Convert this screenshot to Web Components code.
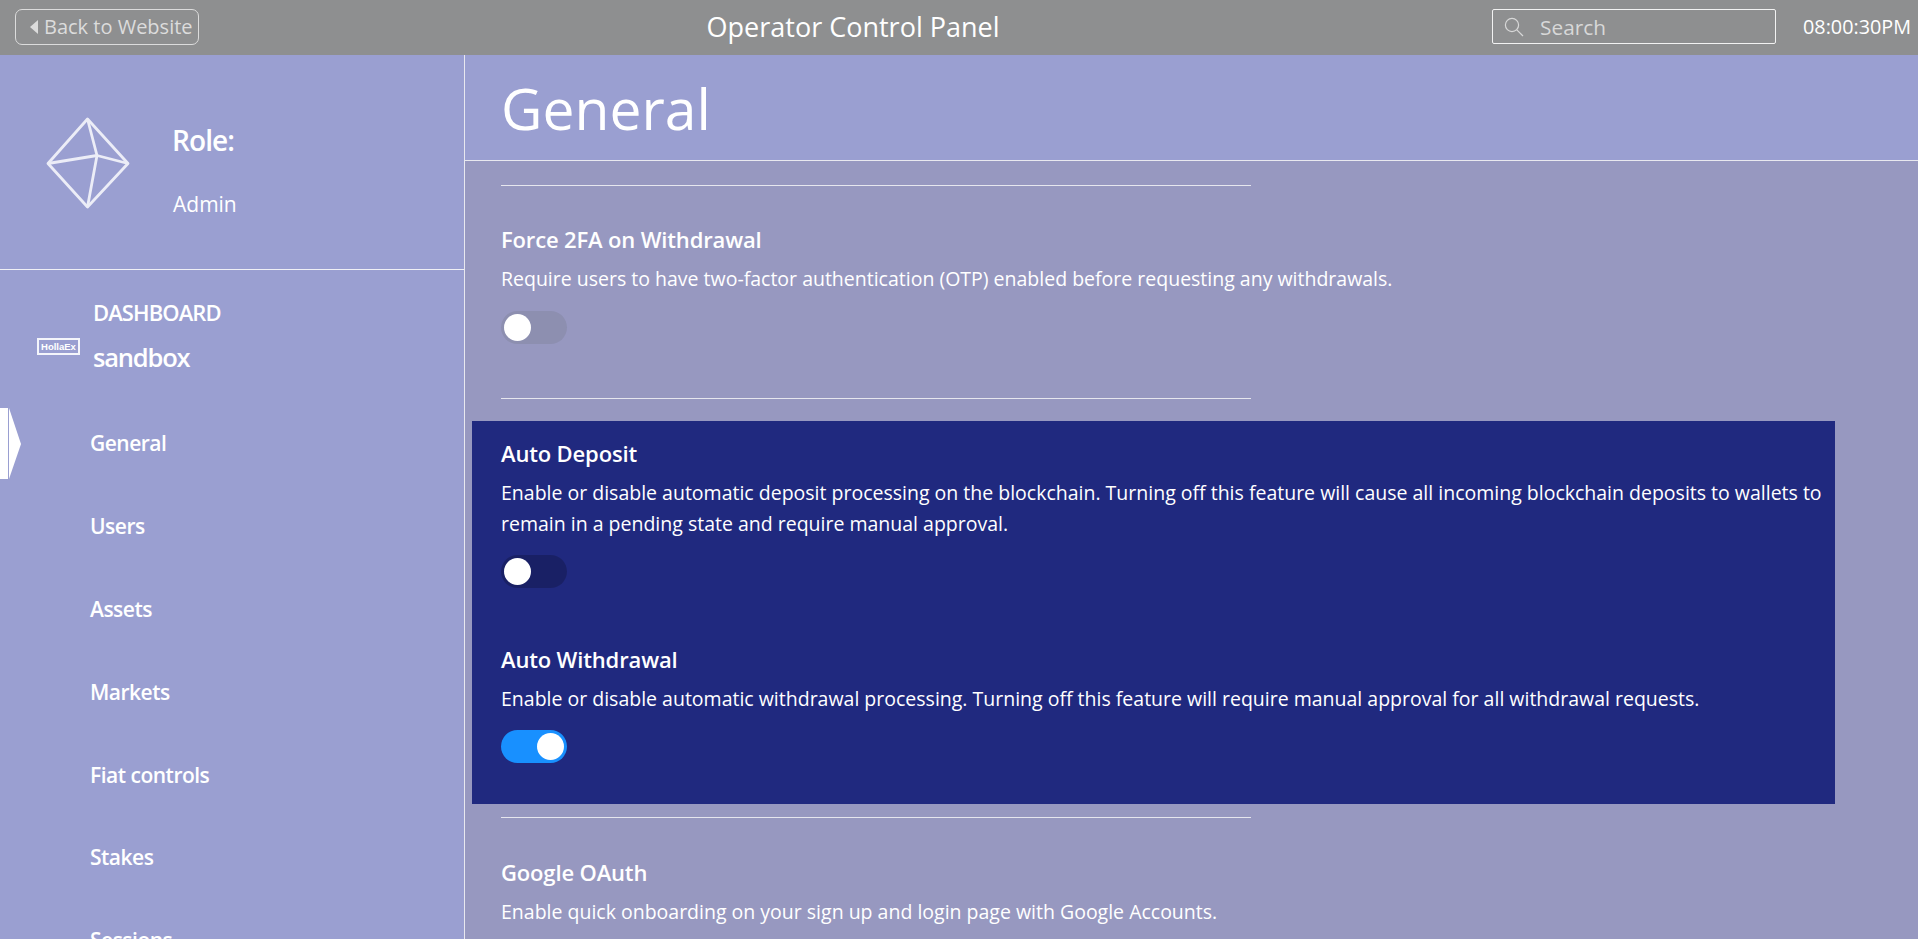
<!DOCTYPE html>
<html>
<head>
<meta charset="utf-8">
<title>Operator Control Panel</title>
<style>
    html, body {
        margin: 0;
        height: 939px;
        overflow: hidden;
        font-family: "Open Sans", "Noto Sans", sans-serif;
        color: #fff;
        background: #9798c0;
    }
</style>
</head>
<body>
<op-app></op-app>
<script>
class OpTopbar extends HTMLElement {
    constructor() {
        super();
        this.shadowDOM = this.attachShadow({ mode: "open" });
    }

    connectedCallback() {
        this.shadowDOM.innerHTML = `
        <style>
            :host {
                display: flex;
                justify-content: space-between;
                align-items: center;
                height: 55px;
                background: #8e8f90;
                box-sizing: border-box;
                padding: 0 7px 2px 15px;
            }
            .back {
                display: flex;
                align-items: center;
                box-sizing: border-box;
                width: 184px;
                height: 36px;
                border: 1px solid #dcdcdc;
                border-radius: 7px;
                padding-left: 14px;
                font-size: 20px;
                color: #dcdcdc;
                white-space: nowrap;
            }
            .back i {
                width: 0;
                height: 0;
                border: 7px solid transparent;
                border-left: 0;
                border-right: 8px solid #dcdcdc;
                margin-right: 6px;
            }
            .title {
                font-size: 27px;
                margin-left: 15px;
            }
            .right {
                display: flex;
                align-items: center;
            }
            .search {
                display: flex;
                align-items: center;
                box-sizing: border-box;
                width: 284px;
                height: 35px;
                border: 1px solid #f2f2f2;
                border-radius: 2px;
                padding-left: 11px;
                font-size: 20.8px;
                color: #d8d8d8;
            }
            .search svg {
                margin-right: 16px;
            }
            .clock {
                margin-left: 27px;
                font-size: 19.8px;
                white-space: nowrap;
            }
        </style>
        <div class="back"><i></i>Back to Website</div>
        <div class="title">Operator Control Panel</div>
        <div class="right">
            <div class="search">
                <svg width="20" height="20" viewBox="0 0 20 20" fill="none" stroke="#d8d8d8" stroke-width="1.2">
                    <circle cx="8" cy="8" r="6.6"/>
                    <path d="M12.8 12.8 L19 19"/>
                </svg>
                Search
            </div>
            <div class="clock">08:00:30PM</div>
        </div>`;
    }
}

class OpRole extends HTMLElement {
    constructor() {
        super();
        this.shadowDOM = this.attachShadow({ mode: "open" });
    }

    connectedCallback() {
        this.shadowDOM.innerHTML = `
        <style>
            :host {
                display: flex;
                align-items: center;
                box-sizing: border-box;
                height: 215px;
                padding-left: 46px;
                border-bottom: 1px solid #f0f0f5;
            }
            svg {
                margin: 2px 43px 0 0;
                flex: none;
            }
            .info {
                margin-top: 16px;
            }
            .role {
                font-size: 28px;
                font-weight: 600;
                line-height: 36px;
                letter-spacing: -0.9px;
                margin-left: -1px;
            }
            .name {
                font-size: 21px;
                line-height: 28px;
                margin-top: 32px;
            }
        </style>
        <svg width="84" height="92" viewBox="0 0 84 92" fill="none" stroke="#ecedf7" stroke-width="2.8" stroke-linejoin="round">
            <path d="M41.5 2 L82 46.5 L41.5 90 L2 46.5 Z"/>
            <path d="M41.5 2 L51 38.5 L41.5 90"/>
            <path d="M2 46.5 L51 38.5 L82 46.5"/>
        </svg>
        <div class="info">
            <div class="role">Role:</div>
            <div class="name">Admin</div>
        </div>`;
    }
}

class OpBrand extends HTMLElement {
    constructor() {
        super();
        this.shadowDOM = this.attachShadow({ mode: "open" });
    }

    connectedCallback() {
        this.shadowDOM.innerHTML = `
        <style>
            :host {
                display: flex;
                align-items: center;
                box-sizing: border-box;
                height: 100px;
                padding: 31px 0 0 37px;
            }
            .logo {
                box-sizing: border-box;
                width: 43px;
                height: 17px;
                border: 2px solid #f4f5fb;
                display: flex;
                align-items: center;
                justify-content: center;
                font: bold 9.5px "Liberation Sans", sans-serif;
                margin: 21px 13px 0 0;
            }
            .dash {
                font-size: 22px;
                font-weight: 600;
                line-height: 28px;
                letter-spacing: -0.9px;
            }
            .env {
                font-size: 25.5px;
                font-weight: 600;
                line-height: 34px;
                margin-top: 14px;
                letter-spacing: -1.2px;
            }
        </style>
        <div class="logo">HollaEx</div>
        <div>
            <div class="dash">DASHBOARD</div>
            <div class="env">sandbox</div>
        </div>`;
    }
}

class OpNavItem extends HTMLElement {
    constructor() {
        super();
        this.shadowDOM = this.attachShadow({ mode: "open" });
    }

    connectedCallback() {
        this.shadowDOM.innerHTML = `
        <style>
            :host {
                display: flex;
                align-items: center;
                position: relative;
                height: 82.8px;
                padding-left: 90px;
                font-size: 21px;
                font-weight: 600;
                letter-spacing: -0.5px;
                flex: none;
            }
            .mark {
                display: none;
                position: absolute;
                left: 0;
                top: 5.5px;
                width: 21px;
                height: 71px;
            }
            :host([active]) .mark {
                display: block;
            }
        </style>
        <svg class="mark" viewBox="0 0 21 71" fill="#fff">
            <rect width="8" height="71"/>
            <path d="M9 0 L21 36 L9 71 Z"/>
        </svg>
        <slot></slot>`;
    }
}

class OpSidebar extends HTMLElement {
    constructor() {
        super();
        this.shadowDOM = this.attachShadow({ mode: "open" });
    }

    connectedCallback() {
        this.shadowDOM.innerHTML = `
        <style>
            :host {
                display: block;
                box-sizing: border-box;
                width: 465px;
                flex: none;
                overflow: hidden;
                background: #9a9fd1;
                border-right: 1px solid #e8e8ef;
            }
            nav {
                display: flex;
                flex-direction: column;
                margin-top: 32px;
            }
        </style>
        <op-role></op-role>
        <op-brand></op-brand>
        <nav><slot></slot></nav>`;
    }
}

class OpToggle extends HTMLElement {
    constructor() {
        super();
        this.shadowDOM = this.attachShadow({ mode: "open" });
    }

    connectedCallback() {
        this.shadowDOM.innerHTML = `
        <style>
            :host {
                display: block;
                position: relative;
                width: 66px;
                height: 33px;
                border-radius: 17px;
                background: rgba(0, 0, 0, 0.2);
            }
            :host([on]) {
                background: #1890ff;
            }
            :host([muted]) {
                background: #8d8fb0;
            }
            .knob {
                position: absolute;
                top: 3px;
                left: 3px;
                width: 27px;
                height: 27px;
                border-radius: 50%;
                background: #fff;
            }
            :host([on]) .knob {
                left: 36px;
            }
        </style>
        <div class="knob"></div>`;
    }
}

class OpSetting extends HTMLElement {
    constructor() {
        super();
        this.shadowDOM = this.attachShadow({ mode: "open" });
    }

    connectedCallback() {
        const title = this.getAttribute("title-text");
        this.shadowDOM.innerHTML = `
        <style>
            :host {
                display: block;
            }
            h4 {
                margin: 0;
                font-size: 22px;
                font-weight: 600;
                line-height: 28px;
                letter-spacing: -0.15px;
            }
            p {
                margin: 11px 0 0;
                font-size: 19.5px;
                line-height: 30.5px;
            }
            ::slotted(op-toggle) {
                margin-top: 16px;
            }
        </style>
        <h4>${title}</h4>
        <p><slot name="desc"></slot></p>
        <slot></slot>`;
    }
}

class OpDivider extends HTMLElement {
    constructor() {
        super();
        this.shadowDOM = this.attachShadow({ mode: "open" });
    }

    connectedCallback() {
        this.shadowDOM.innerHTML = `
        <style>
            :host {
                display: block;
                width: 750px;
                height: 1px;
                background: #e6e6ee;
                margin-left: 36px;
            }
        </style>`;
    }
}

class OpContent extends HTMLElement {
    constructor() {
        super();
        this.shadowDOM = this.attachShadow({ mode: "open" });
    }

    connectedCallback() {
        this.shadowDOM.innerHTML = `
        <style>
            :host {
                display: block;
                flex: 1;
                min-width: 0;
                overflow: hidden;
            }
            header {
                box-sizing: border-box;
                height: 106px;
                background: #9a9fd1;
                border-bottom: 1px solid #e8e8ef;
                padding-left: 36px;
                font-size: 57px;
                line-height: 106px;
            }
            op-divider.first {
                margin-top: 24px;
            }
            op-divider.after-panel {
                margin-top: 13px;
            }
            .force {
                box-sizing: border-box;
                height: 212px;
                padding: 39px 0 0 36px;
            }
            .panel {
                box-sizing: border-box;
                width: 1363px;
                height: 383px;
                margin: 22px 0 0 7px;
                padding: 18px 8px 0 29px;
                background: #20297f;
            }
            .oauth {
                padding: 40px 0 0 36px;
            }
        </style>
        <header>General</header>
        <op-divider class="first"></op-divider>
        <div class="force"><slot name="force"></slot></div>
        <op-divider></op-divider>
        <div class="panel"><slot name="auto"></slot></div>
        <op-divider class="after-panel"></op-divider>
        <div class="oauth"><slot name="oauth"></slot></div>`;
    }
}

class OpApp extends HTMLElement {
    constructor() {
        super();
        this.shadowDOM = this.attachShadow({ mode: "open" });
    }

    connectedCallback() {
        this.shadowDOM.innerHTML = `
        <style>
            :host {
                display: flex;
                flex-direction: column;
                height: 939px;
                overflow: hidden;
            }
            .body {
                display: flex;
                flex: 1;
                min-height: 0;
            }
        </style>
        <op-topbar></op-topbar>
        <div class="body">
            <op-sidebar>
                <op-nav-item active>General</op-nav-item>
                <op-nav-item>Users</op-nav-item>
                <op-nav-item>Assets</op-nav-item>
                <op-nav-item>Markets</op-nav-item>
                <op-nav-item>Fiat controls</op-nav-item>
                <op-nav-item>Stakes</op-nav-item>
                <op-nav-item>Sessions</op-nav-item>
            </op-sidebar>
            <op-content>
                <op-setting slot="force" title-text="Force 2FA on Withdrawal">
                    <span slot="desc">Require users to have two-factor authentication (OTP) enabled before requesting any withdrawals.</span>
                    <op-toggle muted></op-toggle>
                </op-setting>
                <div slot="auto">
                    <op-setting title-text="Auto Deposit">
                        <span slot="desc">Enable or disable automatic deposit processing on the blockchain. Turning off this feature will cause all incoming blockchain deposits to wallets to remain in a pending state and require manual approval.</span>
                        <op-toggle></op-toggle>
                    </op-setting>
                    <op-setting style="margin-top:56.5px" title-text="Auto Withdrawal">
                        <span slot="desc">Enable or disable automatic withdrawal processing. Turning off this feature will require manual approval for all withdrawal requests.</span>
                        <op-toggle on></op-toggle>
                    </op-setting>
                </div>
                <op-setting slot="oauth" title-text="Google OAuth">
                    <span slot="desc">Enable quick onboarding on your sign up and login page with Google Accounts.</span>
                    <op-toggle muted></op-toggle>
                </op-setting>
            </op-content>
        </div>`;
    }
}

customElements.define("op-topbar", OpTopbar);
customElements.define("op-role", OpRole);
customElements.define("op-brand", OpBrand);
customElements.define("op-nav-item", OpNavItem);
customElements.define("op-sidebar", OpSidebar);
customElements.define("op-toggle", OpToggle);
customElements.define("op-setting", OpSetting);
customElements.define("op-divider", OpDivider);
customElements.define("op-content", OpContent);
customElements.define("op-app", OpApp);
</script>
</body>
</html>
